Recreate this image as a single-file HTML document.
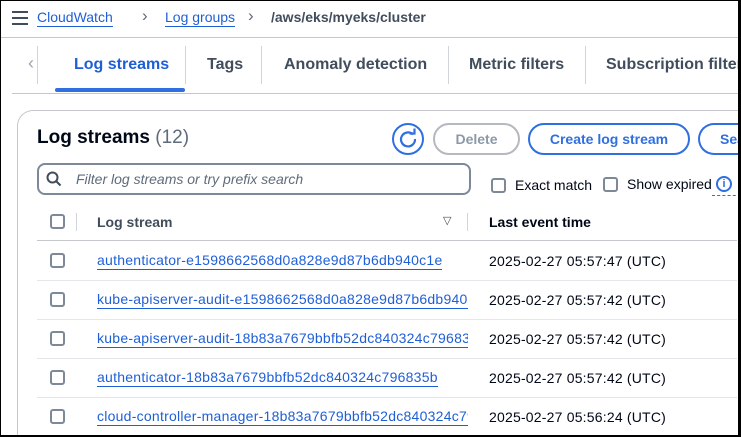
<!DOCTYPE html>
<html><head><style>
*{box-sizing:border-box;margin:0;padding:0}
html,body{width:741px;height:437px;overflow:hidden}
body{background:#fff;font-family:"Liberation Sans",sans-serif;color:#000716;position:relative}
.frame{position:absolute;left:0;top:0;width:741px;height:437px;border:1px solid #000;border-right:3px solid #000;border-bottom:2px solid #000;pointer-events:none;z-index:10}
.abs{position:absolute;white-space:nowrap}
.link{color:#1f5fd6;border-bottom:1px solid #1f5fd6;line-height:17px;display:inline-block}
.cb{position:absolute;width:15px;height:15px;border:2px solid #7d8998;border-radius:3px}
.tab{position:absolute;top:56px;font-size:16px;font-weight:bold;color:#414d5c;white-space:nowrap}
.sep{position:absolute;top:46px;width:1px;height:38px;background:#d1d5db}
.btn{position:absolute;top:123px;height:32px;border:2px solid #2f6fe0;border-radius:16px;font-size:14px;font-weight:bold;color:#2f6fe0;text-align:center;line-height:28px;white-space:nowrap;overflow:hidden}
.row{position:absolute;left:37px;width:700px;height:1px;background:#e4e6ea}
.ln{position:absolute;left:97px;height:20px;font-size:14px;overflow:hidden;white-space:nowrap;letter-spacing:0.25px}
.tm{position:absolute;left:489px;font-size:14px;white-space:nowrap;letter-spacing:0.2px}
.clip{position:absolute;left:0;top:0;width:741px;height:437px;overflow:hidden}
</style></head><body>
<div class="clip">
<div class="abs" style="left:12px;top:11px;width:16px">
 <div style="height:2px;background:#414d5c;margin-bottom:4px"></div><div style="height:2px;background:#414d5c;margin-bottom:4px"></div><div style="height:2px;background:#414d5c"></div>
</div>
<div class="abs" style="left:37px;top:9px;font-size:14px"><span class="link">CloudWatch</span></div>
<div class="abs" style="left:142px;top:6px;font-size:17px;color:#5f6b7a">›</div>
<div class="abs" style="left:165px;top:9px;font-size:14px"><span class="link">Log groups</span></div>
<div class="abs" style="left:248px;top:6px;font-size:17px;color:#5f6b7a">›</div>
<div class="abs" style="left:271px;top:9px;font-size:14px;color:#414d5c;font-weight:bold">/aws/eks/myeks/cluster</div>
<div class="abs" style="left:0;top:37px;width:741px;height:1px;background:#c6c6cd"></div>

<div class="abs" style="left:28px;top:53px;font-size:18px;color:#9ba7b6">‹</div>
<div class="sep" style="left:37px"></div>
<div class="tab" style="left:74px;color:#1f5fd6">Log streams</div>
<div class="abs" style="left:55px;top:88px;width:130px;height:4px;background:#2f6fe0;border-radius:2px"></div>
<div class="sep" style="left:185px"></div>
<div class="tab" style="left:207px">Tags</div>
<div class="sep" style="left:261px"></div>
<div class="tab" style="left:284px">Anomaly detection</div>
<div class="sep" style="left:448px"></div>
<div class="tab" style="left:469px">Metric filters</div>
<div class="sep" style="left:585px"></div>
<div class="tab" style="left:606px">Subscription filters</div>
<div class="abs" style="left:12px;top:93px;width:729px;height:1px;background:#c6c6cd"></div>

<div class="abs" style="left:17px;top:110px;width:724px;height:327px;border:1px solid #c6c6cd;border-right:none;border-bottom:none;border-radius:16px 0 0 0"></div>
<div class="abs" style="left:37px;top:127px;font-size:19px;font-weight:bold">Log streams <span style="font-weight:normal;color:#5f6b7a">(12)</span></div>
<div class="abs" style="left:392px;top:123px;width:32px;height:32px;border:2px solid #2f6fe0;border-radius:50%">
<svg width="28" height="28" viewBox="0 0 28 28"><path d="M19 9.5A7 7 0 1 0 21 14" fill="none" stroke="#2f6fe0" stroke-width="2.2"/><path d="M15.5 8.5h5v-5" fill="none" stroke="#2f6fe0" stroke-width="2.2"/></svg></div>
<div class="btn" style="left:433px;width:87px;border-color:#b4b9c0;color:#8d99a8">Delete</div>
<div class="btn" style="left:528px;width:162px">Create log stream</div>
<div class="btn" style="left:698px;width:43px;border-right:none;border-radius:16px 0 0 16px;text-align:left;padding-left:20px">Search</div>

<div class="abs" style="left:37px;top:163px;width:434px;height:32px;border:2px solid #7d8998;border-radius:8px"></div>
<svg class="abs" style="left:46px;top:171px" width="16" height="16" viewBox="0 0 16 16"><circle cx="6.5" cy="6.5" r="5" fill="none" stroke="#414d5c" stroke-width="2"/><path d="M10.5 10.5l4 4" stroke="#414d5c" stroke-width="2"/></svg>
<div class="abs" style="left:76px;top:171px;font-size:14px;font-style:italic;color:#5f6b7a">Filter log streams or try prefix search</div>
<div class="cb" style="left:491px;top:178px"></div>
<div class="abs" style="left:515px;top:177px;font-size:14px">Exact match</div>
<div class="cb" style="left:603px;top:177px"></div>
<div class="abs" style="left:627px;top:176px;font-size:14px">Show expired</div>
<div class="abs" style="left:716px;top:176px;width:16px;height:16px;border:2px solid #2f6fe0;border-radius:50%;font-size:11px;font-weight:bold;color:#2f6fe0;text-align:center;line-height:12px">i</div>
<div class="abs" style="left:712px;top:195px;width:29px;border-top:1px dashed #2f6fe0"></div>

<div class="cb" style="left:50px;top:214px"></div>
<div class="abs" style="left:76px;top:213px;width:1px;height:18px;background:#d1d5db"></div>
<div class="abs" style="left:97px;top:214px;font-size:14px;font-weight:bold;color:#414d5c">Log stream</div>
<div class="abs" style="left:443px;top:214px;font-size:11px;color:#414d5c">▽</div>
<div class="abs" style="left:467px;top:213px;width:1px;height:18px;background:#d1d5db"></div>
<div class="abs" style="left:489px;top:214px;font-size:14px;font-weight:bold;color:#000716">Last event time</div>
<div class="row" style="top:240px;background:#c6c6cd"></div>

<div class="cb" style="left:50px;top:253px"></div><div class="ln" style="top:252px;max-width:371px"><span class="link">authenticator-e1598662568d0a828e9d87b6db940c1e</span></div><div class="tm" style="top:253px">2025-02-27 05:57:47 (UTC)</div>
<div class="row" style="top:280px"></div>
<div class="cb" style="left:50px;top:292px"></div><div class="ln" style="top:291px;width:371px"><span class="link">kube-apiserver-audit-e1598662568d0a828e9d87b6db940c1e</span></div><div class="tm" style="top:292px">2025-02-27 05:57:42 (UTC)</div>
<div class="row" style="top:319px"></div>
<div class="cb" style="left:50px;top:331px"></div><div class="ln" style="top:330px;width:371px"><span class="link">kube-apiserver-audit-18b83a7679bbfb52dc840324c796835b</span></div><div class="tm" style="top:331px">2025-02-27 05:57:42 (UTC)</div>
<div class="row" style="top:358px"></div>
<div class="cb" style="left:50px;top:370px"></div><div class="ln" style="top:369px"><span class="link">authenticator-18b83a7679bbfb52dc840324c796835b</span></div><div class="tm" style="top:370px">2025-02-27 05:57:42 (UTC)</div>
<div class="row" style="top:397px"></div>
<div class="cb" style="left:50px;top:409px"></div><div class="ln" style="top:408px;width:371px"><span class="link">cloud-controller-manager-18b83a7679bbfb52dc840324c796835b</span></div><div class="tm" style="top:409px">2025-02-27 05:56:24 (UTC)</div>
</div>
<div class="frame"></div>
</body></html>
